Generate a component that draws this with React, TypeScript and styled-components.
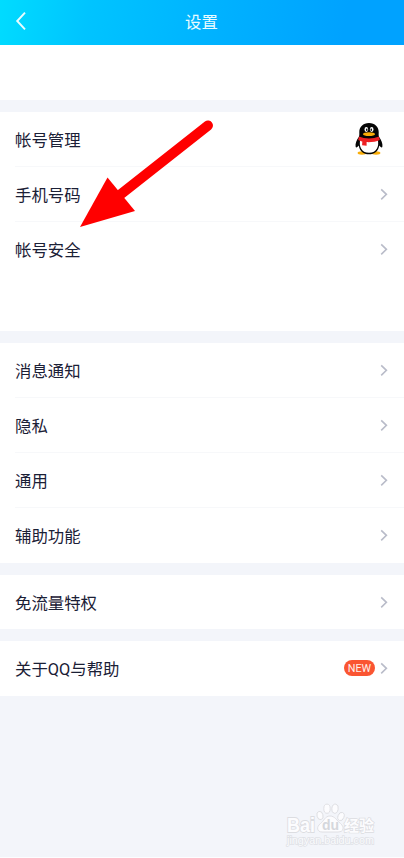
import React from 'react';
import styled, { createGlobalStyle } from 'styled-components';

const GlobalStyle = createGlobalStyle`
  * { box-sizing: border-box; }
  body {
    margin: 0;
    background: #f3f5fa;
    font-family: Roboto, "Noto Sans CJK SC", sans-serif;
  }
`;

const Screen = styled.main`
  position: relative;
  display: flex;
  flex-direction: column;
  width: 404px;
  height: 858px;
  overflow: hidden;
  background: #f3f5fa;
  border-bottom: 1px solid #fcfdfe;
`;

const Header = styled.header`
  display: grid;
  grid-template-columns: 40px 1fr 41px;
  align-items: center;
  flex: none;
  height: 45px;
  padding-bottom: 2px;
  background: linear-gradient(100deg, #00dcff 0%, #00c4ff 22%, #00b1ff 55%, #00a2ff 85%, #00a2ff 100%);
`;

const BackButton = styled.button`
  display: flex;
  width: 40px;
  height: 40px;
  padding: 8px 0 0 13px;
  border: 0;
  background: none;
`;

const Title = styled.h1`
  margin: 0;
  padding: 2px 0 0 0;
  color: #e9fbff;
  font-size: 16.4px;
  font-weight: 400;
  line-height: 24px;
  text-align: center;
`;

const Blank = styled.div`
  flex: none;
  height: 55px;
  background: #fff;
`;

const Group = styled.section<{ $height: number }>`
  flex: none;
  height: ${({ $height }) => $height}px;
  margin-top: 12px;
  background: #fff;
`;

const Row = styled.div<{ $divided?: boolean; $height: number }>`
  display: flex;
  align-items: center;
  height: ${({ $height }) => $height}px;
  margin-left: 15px;
  padding-right: 16px;
  border-bottom: 1px solid ${({ $divided }) => ($divided ? '#f7f8fa' : 'transparent')};
`;

const Label = styled.span`
  flex: 1;
  padding-top: 4px;
  color: #1b2036;
  font-size: 16.4px;
  line-height: 24px;
`;

const Badge = styled.span`
  width: 31px;
  height: 16px;
  margin-right: 5px;
  border-radius: 8px;
  background: #fa5532;
  color: #fff0eb;
  font-size: 10.8px;
  line-height: 17px;
  text-align: center;
`;

const Avatar = styled.svg`
  display: block;
  margin-right: 4px;
`;

const Pointer = styled.svg`
  position: absolute;
  top: 110px;
  left: 70px;
  pointer-events: none;
`;

const Watermark = styled.svg`
  position: absolute;
  left: 284px;
  top: 800px;
`;

const Chevron = () => (
  <svg width="8" height="14" viewBox="0 0 8 14" fill="none">
    <path d="M1.2 2.300 6.400 7.300 1.200 12.300" stroke="#b9bcc9" strokeWidth="1.6" />
  </svg>
);

const Penguin = () => (
  <Avatar width="30" height="34" viewBox="0 0 30 34">
    <ellipse cx="8" cy="31" rx="4.400" ry="1.700" fill="#f9ad08" />
    <ellipse cx="22" cy="31" rx="4.400" ry="1.700" fill="#f9ad08" />
    <path
      d="M15 1C9 1 5.300 5 5.300 10c0 2 .2 3.500-.5 5C2.700 18 1.100 21.500 1.600 24.500c.3 1.800 2 .6 3.200-1C5.500 29 9.500 32.300 15 32.300s9.500-3.300 10.200-8.800c1.200 1.600 2.900 2.800 3.200 1 .5-3-1.200-6.500-3.300-9.500-.6-1.500-.4-3-.4-5C24.700 5 21 1 15 1Z"
      fill="#050505"
    />
    <path d="M6.300 17.500h17.400c1.700 6.500-.8 13.300-8.700 13.300S4.600 24 6.300 17.500Z" fill="#fff" />
    <path d="M5 14.500c5.800 2.600 14 2.600 20 0l.8 3.500c-3.500 1.700-8.800 2.300-13.200 2.100v3.700l-4.500-.5.200-3.900c-1.700-.3-2.800-.8-4.100-1.400Z" fill="#ed2024" />
    <ellipse cx="12.300" cy="7.500" rx="1.800" ry="2.400" fill="#fff" />
    <ellipse cx="17.700" cy="7.500" rx="1.800" ry="2.400" fill="#fff" />
    <ellipse cx="12.700" cy="7.700" rx=".8" ry="1.200" fill="#111" />
    <ellipse cx="17.300" cy="7.700" rx=".8" ry="1.200" fill="#111" />
    <ellipse cx="15" cy="12.200" rx="6" ry="1.900" fill="#f9ad08" />
  </Avatar>
);

type Item = { label: string; badge?: string; avatar?: boolean };

const groups: { height: number; rowHeight: number; items: Item[] }[] = [
  { height: 219, rowHeight: 55, items: [{ label: '帐号管理', avatar: true }, { label: '手机号码' }, { label: '帐号安全' }] },
  { height: 220, rowHeight: 55, items: [{ label: '消息通知' }, { label: '隐私' }, { label: '通用' }, { label: '辅助功能' }] },
  { height: 54, rowHeight: 54, items: [{ label: '免流量特权' }] },
  { height: 55, rowHeight: 55, items: [{ label: '关于QQ与帮助', badge: 'NEW' }] },
];

export default function App() {
  return (
    <>
      <GlobalStyle />
      <Screen>
        <Header>
          <BackButton aria-label="返回">
            <svg width="15" height="20" viewBox="0 0 15 20" fill="none">
              <path d="M12 2.700 4.200 11l7.800 8.300" stroke="#e9fcff" strokeWidth="1.900" />
            </svg>
          </BackButton>
          <Title>设置</Title>
        </Header>
        <Blank />
        {groups.map(({ height, rowHeight, items }) => (
          <Group key={items[0].label} $height={height}>
            {items.map(({ label, badge, avatar }, index) => (
              <Row key={label} $height={rowHeight} $divided={index < items.length - 1}>
                <Label>{label}</Label>
                {badge && <Badge>{badge}</Badge>}
                {avatar ? <Penguin /> : <Chevron />}
              </Row>
            ))}
          </Group>
        ))}
        <Pointer width="150" height="125" viewBox="0 0 150 125">
          <path d="M138 15.500 46 88" stroke="#f00" strokeWidth="10" strokeLinecap="round" />
          <path d="M10 117 37.500 67.500 65 101Z" fill="#f00" />
        </Pointer>
        <Watermark width="100" height="52" viewBox="0 0 100 52" fontFamily="Liberation Sans, Noto Sans CJK SC, sans-serif">
          <g fill="#fcfcfe" stroke="#dcdde1" strokeWidth=".9">
            <text x="3" y="31.500" fontSize="19.500" fontWeight="700" strokeWidth="1.800" paintOrder="stroke" textLength="28" lengthAdjust="spacingAndGlyphs">Bai</text>
            <ellipse cx="36" cy="15.500" rx="3" ry="4.200" transform="rotate(-15 36 15.500)" />
            <ellipse cx="43" cy="8.700" rx="3.200" ry="4.600" />
            <ellipse cx="51" cy="8.700" rx="3.200" ry="4.600" transform="rotate(10 51 8.700)" />
            <ellipse cx="57" cy="16.500" rx="3" ry="4.200" transform="rotate(20 57 16.500)" />
            <path d="M46 16c-5 0-6 5-9.500 7.500C32 27 33 32 38 32h16c6 0 6.500-5 2.500-8.500C52.500 20.500 51 16 46 16Z" />
            <text x="60" y="31" fontSize="15" fontWeight="700" strokeWidth="1.400" paintOrder="stroke">经验</text>
          </g>
          <text x="46.500" y="30" fill="#d5d7dc" fontSize="14" fontWeight="700" textAnchor="middle">du</text>
          <text x="3" y="43.500" fill="#fafbfd" stroke="#dfe1e6" strokeWidth="1.400" paintOrder="stroke" fontSize="10" textLength="87" lengthAdjust="spacingAndGlyphs">jingyan.baidu.com</text>
        </Watermark>
      </Screen>
    </>
  );
}
